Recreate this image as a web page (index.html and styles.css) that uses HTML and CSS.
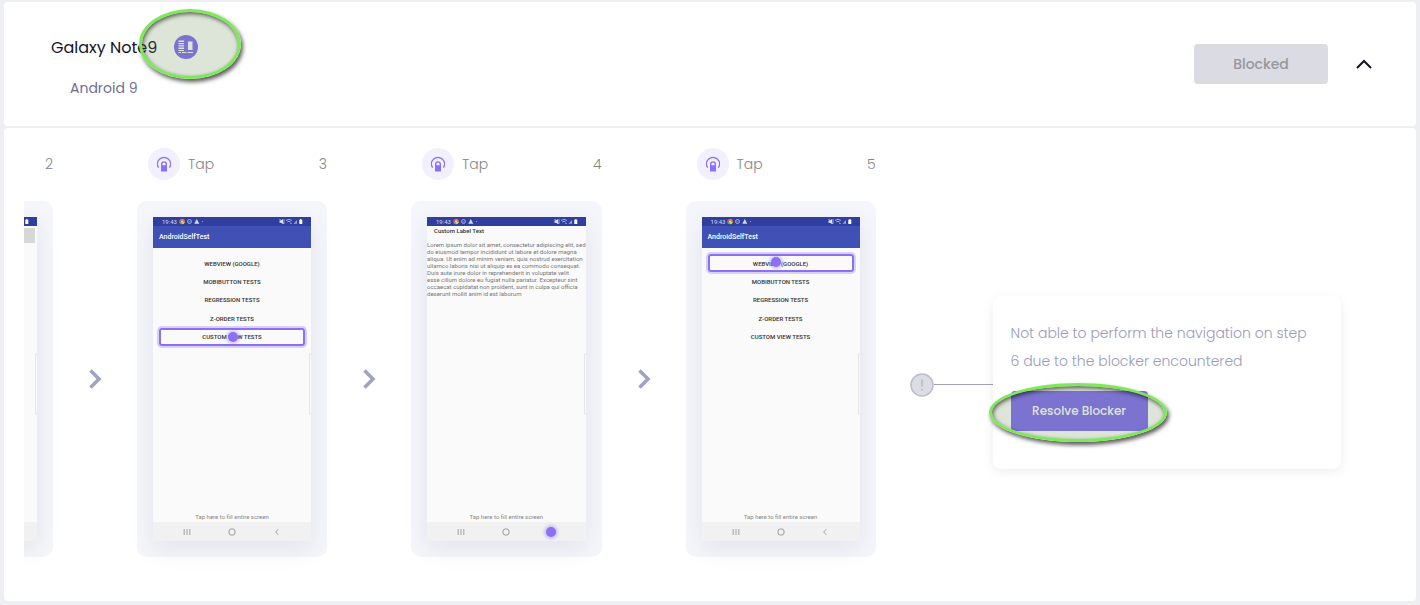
FILE: index.html
```html
<!DOCTYPE html>
<html lang="en">
<head>
<meta charset="utf-8">
<meta name="viewport" content="width=device-width, initial-scale=1">
<title>Galaxy Note9</title>
<link rel="stylesheet" href="styles.css">
</head>
<body>
<svg class="defs" aria-hidden="true">
  <symbol id="tap" viewBox="0 0 16 16">
    <path d="M2.600 11.600A6.500 6.500 0 1 1 13.400 11.600" fill="none" stroke="currentColor" stroke-width="1.300"/>
    <path fill-rule="evenodd" d="M5 15.500V8.200a3 3 0 0 1 6 0V15.500ZM6.400 9.200H9.600V8a1.600 1.600 0 0 0-3.200 0Z" fill="currentColor"/>
  </symbol>
  <symbol id="arrow" viewBox="0 0 14 22">
    <path d="M2.500 2.500L11 11L2.500 19.500" fill="none" stroke="currentColor" stroke-width="3.600"/>
  </symbol>
  <symbol id="apps" viewBox="0 0 24 7">
    <path d="M3 .7A2.800 2.800 0 0 0 .2 3.500H3Z" fill="#e0564a"/>
    <path d="M3 .7A2.800 2.800 0 0 1 5.800 3.500H3Z" fill="#f0704e"/>
    <path d="M.2 3.500A2.800 2.800 0 0 0 3 6.300V3.500Z" fill="#58b368"/>
    <path d="M5.800 3.500A2.800 2.800 0 0 1 3 6.300V3.500Z" fill="#f3c74a"/>
    <circle cx="3" cy="3.500" r="1.100" fill="#bcd6ff"/>
    <circle cx="10.500" cy="3.500" r="2" fill="none" stroke="#b9c0e6" stroke-width=".8"/>
    <path d="M9.500 3.500l.8.700 1.300-1.400" fill="none" stroke="#b9c0e6" stroke-width=".6"/>
    <path d="M17.800 1L20.300 5.800H15.300Z" fill="#d5d9f0"/>
    <circle cx="23.400" cy="3.500" r=".5" fill="#b9c0e6"/>
  </symbol>
  <symbol id="signal" viewBox="0 0 24 7">
    <path d="M.5 2.500H2L4 1V6L2 4.800H.5Z" fill="#dfe2f4"/>
    <path d="M.5 1L5 6M5 1.200V5.600" stroke="#dfe2f4" stroke-width=".7"/>
    <path d="M7 2.500Q10 0 13 2.500M8.300 4Q10 2.600 11.700 4" fill="none" stroke="#c5cae8" stroke-width=".8"/>
    <circle cx="12" cy="5.400" r=".6" fill="#c5cae8"/>
    <path d="M14.500 5.800H18V2Z" fill="#9aa2d6"/>
    <path d="M20.300 1.700H21.200V1H22.400V1.700H23.300V6H20.300Z" fill="#fff"/>
  </symbol>
  <symbol id="recents" viewBox="0 0 8 8"><path d="M1.200 1V7M4 1V7M6.800 1V7" stroke="#999" stroke-width=".9"/></symbol>
  <symbol id="home" viewBox="0 0 8 8"><rect x="1" y="1" width="6" height="6" rx="2.200" fill="none" stroke="#999"/></symbol>
  <symbol id="back" viewBox="0 0 8 8"><path d="M5.300 1.200L2.700 4L5.300 6.800" fill="none" stroke="#999" stroke-width=".9"/></symbol>
</svg>

<main class="page">
  <header class="panel device">
    <div class="device-info">
      <h1 class="device-name">Galaxy Note9
        <span class="marked marked-round">
          <svg class="badge" viewBox="0 0 24 24" role="img" aria-label="Device details">
            <circle cx="12" cy="12" r="12" fill="#846cf5"/>
            <path d="M4.500 5.500H10V7H4.500ZM4.500 8H10V9.300H4.500ZM4.500 10.300H10V11.600H4.500ZM4.500 12.600H10V13.900H4.500ZM4.500 14.900H10V16H4.500ZM4.500 17H7V18H4.500ZM8 17H12.500V18H8ZM13.500 17H19V18H13.500Z" fill="#fff"/>
            <path d="M14 6.500H18.500V15H14Z" fill="#fff"/>
          </svg>
        </span>
      </h1>
      <p class="device-os">Android 9</p>
    </div>
    <div class="device-actions">
      <button class="status" type="button" disabled>Blocked</button>
      <button class="toggle" type="button" aria-label="Collapse">
        <svg width="16" height="10" viewBox="0 0 16 10"><path d="M1 9L8 2L15 9" fill="none" stroke="#14132b" stroke-width="2"/></svg>
      </button>
    </div>
  </header>

  <section class="panel flow" aria-label="Steps">
    <div class="viewport">
      <div class="strip">
        <article class="step">
          <div class="step-head"><span class="step-no">2</span></div>
          <div class="frame"><div class="screen">
            <div class="statusbar"><svg class="signal"><use href="#signal"/></svg></div>
            <div class="field"></div>
            <div class="edge"></div>
            <div class="spacer"></div>
            <div class="navbar"></div>
          </div></div>
        </article>
        <div class="next"><svg><use href="#arrow"/></svg></div>

        <article class="step">
          <div class="step-head"><span class="step-icon"><svg><use href="#tap"/></svg></span><span>Tap</span><span class="step-no">3</span></div>
          <div class="frame"><div class="screen">
            <div class="statusbar"><span>19:43</span><svg class="apps"><use href="#apps"/></svg><svg class="signal"><use href="#signal"/></svg></div>
            <div class="appbar">AndroidSelfTest</div>
            <ul class="tests">
              <li>WEBVIEW (GOOGLE)</li>
              <li>MOBIBUTTON TESTS</li>
              <li>REGRESSION TESTS</li>
              <li>Z-ORDER TESTS</li>
              <li class="target">CUSTOM VIEW TESTS<i class="dot dot-custom"></i></li>
            </ul>
            <div class="edge"></div>
            <p class="hint">Tap here to fill entire screen</p>
            <div class="navbar"><svg><use href="#recents"/></svg><svg><use href="#home"/></svg><svg><use href="#back"/></svg></div>
          </div></div>
        </article>
        <div class="next"><svg><use href="#arrow"/></svg></div>

        <article class="step">
          <div class="step-head"><span class="step-icon"><svg><use href="#tap"/></svg></span><span>Tap</span><span class="step-no">4</span></div>
          <div class="frame"><div class="screen">
            <div class="statusbar"><span>19:43</span><svg class="apps"><use href="#apps"/></svg><svg class="signal"><use href="#signal"/></svg></div>
            <h2 class="label-title">Custom Label Text</h2>
            <p class="lorem">Lorem ipsum dolor sit amet, consectetur adipiscing elit, sed<br>do eiusmod tempor incididunt ut labore et dolore magna<br>aliqua. Ut enim ad minim veniam, quis nostrud exercitation<br>ullamco laboris nisi ut aliquip ex ea commodo consequat.<br>Duis aute irure dolor in reprehenderit in voluptate velit<br>esse cillum dolore eu fugiat nulla pariatur. Excepteur sint<br>occaecat cupidatat non proident, sunt in culpa qui officia<br>deserunt mollit anim id est laborum</p>
            <div class="edge"></div>
            <p class="hint">Tap here to fill entire screen</p>
            <div class="navbar"><svg><use href="#recents"/></svg><svg><use href="#home"/></svg><span class="nav-target"><i class="dot"></i></span></div>
          </div></div>
        </article>
        <div class="next"><svg><use href="#arrow"/></svg></div>

        <article class="step">
          <div class="step-head"><span class="step-icon"><svg><use href="#tap"/></svg></span><span>Tap</span><span class="step-no">5</span></div>
          <div class="frame"><div class="screen">
            <div class="statusbar"><span>19:43</span><svg class="apps"><use href="#apps"/></svg><svg class="signal"><use href="#signal"/></svg></div>
            <div class="appbar">AndroidSelfTest</div>
            <ul class="tests">
              <li class="target">WEBVIEW (GOOGLE)<i class="dot dot-webview"></i></li>
              <li>MOBIBUTTON TESTS</li>
              <li>REGRESSION TESTS</li>
              <li>Z-ORDER TESTS</li>
              <li>CUSTOM VIEW TESTS</li>
            </ul>
            <div class="edge"></div>
            <p class="hint">Tap here to fill entire screen</p>
            <div class="navbar"><svg><use href="#recents"/></svg><svg><use href="#home"/></svg><svg><use href="#back"/></svg></div>
          </div></div>
        </article>

        <div class="blocker">
          <svg class="alert" viewBox="0 0 24 24" aria-hidden="true">
            <circle cx="12" cy="12" r="11" fill="#dcdce4" stroke="#babbcd" stroke-width="1.500"/>
            <path d="M12 6.500V13.500M12 15.800V17.500" stroke="#babbcd" stroke-width="1.800"/>
          </svg>
          <div class="line"></div>
          <div class="message">
            <p class="message-text">Not able to perform the navigation on step<br>6 due to the blocker encountered</p>
            <span class="marked marked-wide"><button class="resolve" type="button">Resolve Blocker</button></span>
          </div>
        </div>
      </div>
    </div>
  </section>
</main>
</body>
</html>
```

FILE: styles.css
```css
* { box-sizing: border-box; }

body {
  margin: 0;
  background: #eeeff3;
  color: #858585;
  font-family: Poppins, Inter, "Open Sans", sans-serif;
  font-size: 14px;
}

h1, h2, p, ul { margin: 0; padding: 0; font-weight: 400; }
ul { list-style: none; }
svg { display: block; }
button { font: inherit; border: 0; }
.defs { position: absolute; width: 0; height: 0; }

.page {
  display: flex;
  flex-direction: column;
  gap: 2px;
  padding: 2px 4px 4px;
}

.panel { background: #fff; border-radius: 4px; }

.device {
  display: flex;
  align-items: center;
  justify-content: space-between;
  padding: 25px 44px 25px 47px;
}

.device-info { display: flex; flex-direction: column; gap: 8px; }

.device-name {
  display: flex;
  align-items: center;
  gap: 17px;
  height: 40px;
  color: #14132b;
  font-size: 16px;
}

.device-os {
  padding-left: 19px;
  color: #6f6f96;
  line-height: 26px;
}

.device-actions { display: flex; align-items: center; gap: 28px; }

.status {
  width: 134px;
  height: 40px;
  border-radius: 4px;
  background: #dbdbe4;
  color: #979799;
  font-weight: 500;
}

.toggle { padding: 0; background: none; cursor: pointer; }

/* Green ellipse that calls out a control */
.marked { position: relative; display: inline-block; }

.marked::after {
  content: "";
  position: absolute;
  border: 3px solid #7de957;
  border-radius: 50%;
  background: rgba(96, 137, 78, 0.22);
  box-shadow: 2px 3px 4px rgba(0, 0, 0, 0.65), inset 1px 2px 4px rgba(0, 0, 0, 0.6);
  pointer-events: none;
}

.marked-round::after { inset: -26px -43px -20px -35px; }
.marked-wide::after { inset: -8px -19px -11px -22px; }
.badge { width: 24px; height: 24px; }

.flow { padding: 20px; }
.viewport { overflow: hidden; }

/* Scrolled so that the second step is nearly out of view */
.strip { display: flex; margin-left: -161px; padding-bottom: 24px; }

.step { flex: 0 0 190px; }

.step-head {
  display: flex;
  align-items: center;
  gap: 8px;
  height: 32px;
  margin-bottom: 21px;
  padding-left: 11px;
  font-weight: 300;
}

.step-no { margin-left: auto; }

.step-icon {
  display: grid;
  place-items: center;
  width: 32px;
  height: 32px;
  border-radius: 50%;
  background: #f2effe;
  color: #8b6ff5;
}

.step-icon svg { width: 16px; height: 16px; }

.frame {
  padding: 16px;
  border-radius: 10px;
  background: #f5f6fb;
}

.next {
  flex: 0 0 84px;
  display: grid;
  place-items: center;
  margin-top: 53px;
  color: #a2a3bf;
}

.next svg { width: 14px; height: 22px; }

.screen {
  position: relative;
  display: flex;
  flex-direction: column;
  height: 324px;
  background: #fafafa;
  box-shadow: 0 8px 24px rgba(30, 30, 60, 0.08);
  color: #333;
  font-family: Roboto, sans-serif;
  font-size: 6px;
}

.statusbar {
  display: flex;
  align-items: center;
  gap: 2px;
  height: 9px;
  padding: 0 8px 0 9px;
  background: #303f9f;
  color: #d5d9f0;
}

.apps, .signal { width: 24px; height: 7px; }
.signal { margin-left: auto; }

.appbar {
  padding-left: 6px;
  background: #3f51b5;
  color: #fff;
  font-size: 7px;
  font-weight: 500;
  line-height: 22px;
}

.tests {
  display: grid;
  grid-auto-rows: 1fr;
  height: 92px;
  margin: 6px 6px 0;
  text-align: center;
  font-weight: 500;
}

.tests li {
  position: relative;
  display: grid;
  place-items: center;
}

.target {
  border-radius: 3px;
  box-shadow: inset 0 0 0 2px #8b6ff5, 0 0 0 2px rgba(139, 111, 245, 0.3);
}

.dot {
  position: absolute;
  top: 50%;
  left: 50%;
  width: 10px;
  height: 10px;
  margin: -5px;
  border-radius: 50%;
  background: #8b6ff5;
  box-shadow: 0 0 3px 2px rgba(139, 111, 245, 0.35);
}

.dot-custom { left: 51%; }
.dot-webview { top: 42%; left: 47%; }

.label-title {
  padding-left: 7px;
  font-size: 6px;
  font-weight: 500;
  line-height: 10px;
}

.lorem {
  margin-top: 5px;
  color: #777;
  line-height: 7px;
  white-space: nowrap;
}

.field {
  height: 15px;
  margin: 2px 2px 0 0;
  background: #d6d8d7;
}

.spacer { flex: 1; }

.edge {
  position: absolute;
  top: 136px;
  right: 0;
  width: 2px;
  height: 62px;
  border: 1px solid #e6e6e6;
  border-right: 0;
  border-radius: 2px 0 0 2px;
}

.hint {
  margin-top: auto;
  color: #888;
  line-height: 10px;
  text-align: center;
}

.navbar {
  display: grid;
  grid-template-columns: repeat(3, 1fr);
  place-items: center;
  height: 19px;
  padding: 0 12px;
  background: #f1f1f1;
}

.navbar svg { width: 8px; height: 8px; }
.nav-target { position: relative; }

.blocker {
  flex: 1 0 auto;
  display: flex;
  align-items: center;
  margin: 59px 0 0 34px;
}

.alert { width: 24px; height: 24px; margin-top: 6px; }
.line { width: 59px; height: 1px; margin-top: 4px; background: #a2a3bf; }

.message {
  flex: 0 0 348px;
  padding: 23px 18px 38px;
  border-radius: 8px;
  background: #fff;
  box-shadow: 0 3px 12px rgba(0, 0, 0, 0.07);
}

.message-text {
  margin-bottom: 16px;
  color: #9a9bba;
  font-weight: 300;
  line-height: 28px;
  white-space: nowrap;
}

.resolve {
  display: block;
  width: 137px;
  height: 40px;
  padding: 0;
  border-radius: 4px;
  background: #846cf5;
  color: #fff;
  font-size: 12px;
  font-weight: 500;
  cursor: pointer;
}
```
